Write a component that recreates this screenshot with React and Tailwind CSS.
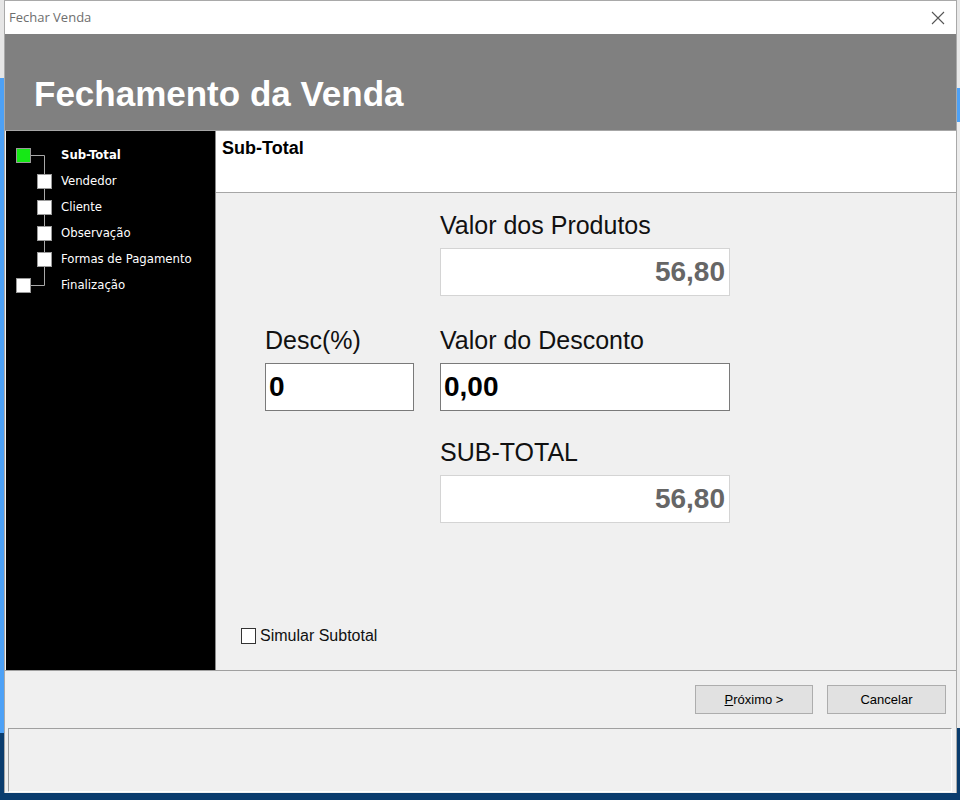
import React from 'react';

const steps = [
  { label: 'Sub-Total', active: true },
  { label: 'Vendedor' },
  { label: 'Cliente' },
  { label: 'Observação' },
  { label: 'Formas de Pagamento' },
  { label: 'Finalização' },
];

const font = { fontFamily: '"Liberation Sans", Arial, sans-serif' };

const StepTree = () => (
  <svg className="absolute left-0 top-0" width="60" height="170" viewBox="0 0 60 170">
    <path d="M24 24.5H38.5V154.5H24" fill="none" stroke="#a8a8a8" strokeWidth="1" />
    <rect x="10.5" y="17.5" width="14" height="14" fill="#16e816" stroke="#9a9a9a" />
    {[50, 76, 102, 128].map((cy) => (
      <rect key={cy} x="31.5" y={cy - 7 + 0.5} width="14" height="14" fill="#ffffff" stroke="#9a9a9a" />
    ))}
    <rect x="10.5" y="147.5" width="14" height="14" fill="#ffffff" stroke="#9a9a9a" />
  </svg>
);

const Field = ({ label, value, readOnly }) => (
  <div className="flex flex-col">
    <div className="h-[30px] leading-[30px] text-[25px] text-[#111]">{label}</div>
    <div
      className={
        readOnly
          ? 'mt-[8px] h-[48px] bg-white border border-[#d4d4d4] flex items-center justify-end pr-[4px] text-[28px] font-bold text-[#666666]'
          : 'mt-[8px] h-[48px] bg-white border border-[#7a7a7a] flex items-center pl-[3px] text-[28px] font-bold text-black'
      }
    >
      {value}
    </div>
  </div>
);

const App = () => {
  return (
    <div className="w-[960px] h-[800px] flex flex-col bg-[#0b3d6e] overflow-hidden" style={font}>
      <div className="flex h-[793px]">
        {/* desktop behind, left */}
        <div className="w-[4px] flex flex-col">
          <div className="h-[78px] bg-[#e6e6e6]" />
          <div className="flex-1 bg-[#4da1f6]" />
          <div className="h-[60px] bg-[#0b3d6e]" />
        </div>

        {/* window */}
        <div className="w-[953px] flex flex-col bg-[#f0f0f0] border border-[#a9a9a9] border-b-0">
          {/* title bar */}
          <div className="h-[33px] bg-white flex items-center justify-between pl-[4px] pr-[11px]">
            <span className="text-[13px] text-[#6e6e6e]" style={{ fontFamily: '"Open Sans", "Liberation Sans", sans-serif' }}>
              Fechar Venda
            </span>
            <svg width="14" height="14" viewBox="0 0 14 14">
              <path d="M1 1L13 13M13 1L1 13" stroke="#555" strokeWidth="1.1" />
            </svg>
          </div>

          {/* header */}
          <div className="h-[97px] bg-[#808080] border-b border-[#a6a6a6] pt-[40px] pl-[29px]">
            <h1 className="text-[35px] leading-[40px] font-bold text-white">Fechamento da Venda</h1>
          </div>

          {/* body */}
          <div className="h-[539px] flex pl-[1px]">
            <div className="relative w-[210px] bg-black border-r border-[#8a8a8a] pt-[11px] pl-[55px]">
              <StepTree />
              {steps.map((s) => (
                <div
                  key={s.label}
                  className={
                    s.active
                      ? 'h-[26px] leading-[26px] text-[13px] text-white font-bold'
                      : 'h-[26px] leading-[26px] text-[13px] text-white'
                  }
                  style={{ fontFamily: '"DejaVu Sans Condensed", "Liberation Sans", sans-serif' }}
                >
                  {s.label}
                </div>
              ))}
            </div>

            <div className="flex-1 flex flex-col">
              <div className="h-[62px] bg-white border-b border-[#a6a6a6] pt-[6px] pl-[6px]">
                <div className="text-[18px] leading-[22px] font-bold text-black">Sub-Total</div>
              </div>

              <div className="flex-1 flex flex-col">
                <div className="pl-[49px] pt-[17px] flex flex-col">
                  <div className="flex gap-[26px]">
                    <div className="w-[149px]" />
                    <div className="w-[290px]">
                      <Field label="Valor dos Produtos" value="56,80" readOnly />
                    </div>
                  </div>
                  <div className="flex gap-[26px] mt-[29px]">
                    <div className="w-[149px]">
                      <Field label="Desc(%)" value="0" />
                    </div>
                    <div className="w-[290px]">
                      <Field label="Valor do Desconto" value="0,00" />
                    </div>
                  </div>
                  <div className="flex gap-[26px] mt-[26px]">
                    <div className="w-[149px]" />
                    <div className="w-[290px]">
                      <Field label="SUB-TOTAL" value="56,80" readOnly />
                    </div>
                  </div>
                </div>

                <label className="mt-[101px] ml-[25px] flex items-center gap-[4px] text-[16px] text-[#111]">
                  <span className="w-[15px] h-[16px] bg-white border border-[#333]" />
                  Simular Subtotal
                </label>
              </div>
            </div>
          </div>

          {/* button bar */}
          <div className="h-[58px] border-t border-[#a0a0a0] flex justify-end items-start pt-[14px] pr-[10px] gap-[14px]">
            <button className="w-[118px] h-[29px] bg-[#e1e1e1] border border-[#adadad] text-[13px] text-black">
              <span className="underline">P</span>róximo &gt;
            </button>
            <button className="w-[119px] h-[29px] bg-[#e1e1e1] border border-[#adadad] text-[13px] text-black">
              Cancelar
            </button>
          </div>

          {/* status panel */}
          <div className="flex-1 pl-[3px] pr-[4px] pb-[1px]">
            <div className="h-full border border-[#a0a0a0] border-r-white border-b-white bg-[#f0f0f0]" />
          </div>
        </div>

        {/* desktop behind, right */}
        <div className="w-[3px] flex flex-col">
          <div className="h-[88px] bg-[#e8e8e8]" />
          <div className="h-[34px] bg-[#4da1f6]" />
          <div className="flex-1 bg-[#ececec]" />
          <div className="h-[65px] bg-[#0b3d6e]" />
        </div>
      </div>
      <div className="h-[7px] bg-[#0b3d6e]" />
    </div>
  );
};

export default App;
